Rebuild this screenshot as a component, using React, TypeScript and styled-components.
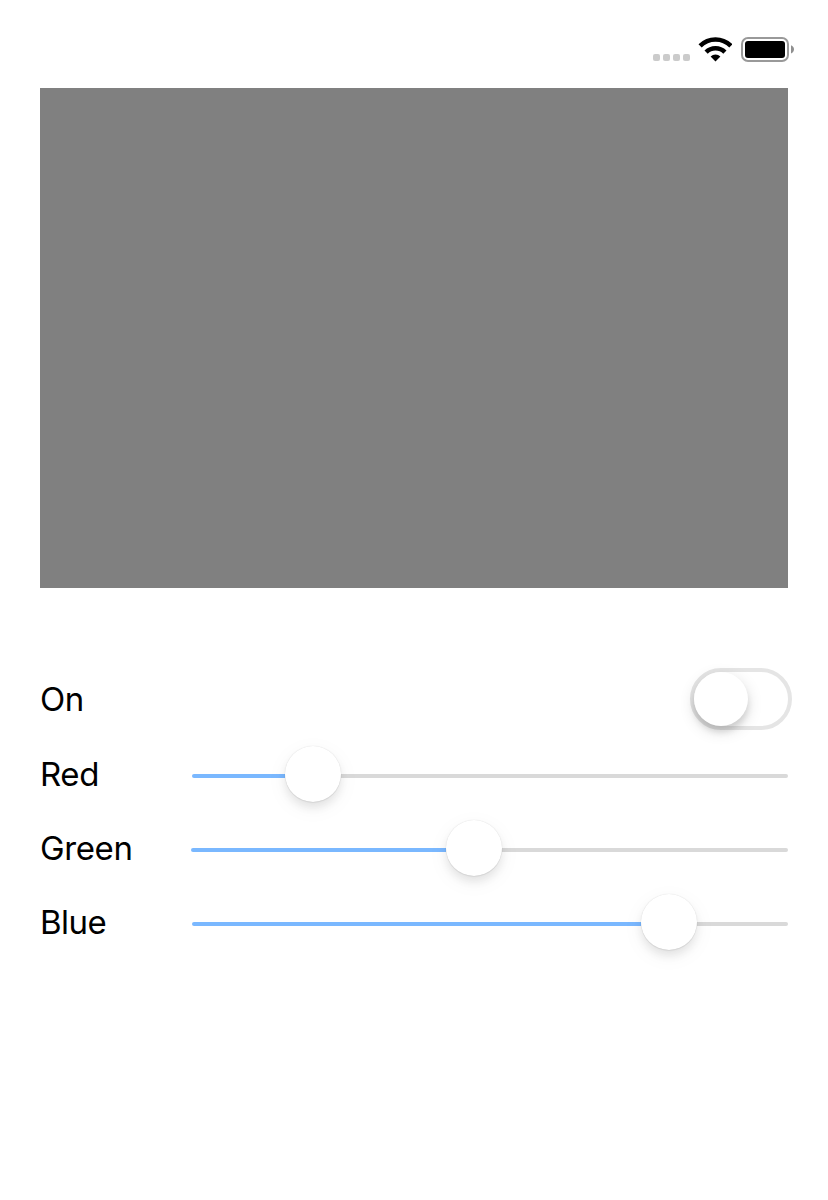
import React from "react";
import styled, { createGlobalStyle } from "styled-components";

const GlobalStyle = createGlobalStyle`
  * { box-sizing: border-box; }
  body { margin: 0; background: #fff; color: #000; }
`;

const Screen = styled.main`
  display: flex;
  flex-direction: column;
  width: 828px;
  height: 1200px;
  background: #fff;
  font-family: Inter, "Liberation Sans", sans-serif;
  overflow: hidden;
`;

const StatusBar = styled.header`
  display: flex;
  justify-content: flex-end;
  height: 88px;
  padding: 37px 34px 0 0;
`;

const Signal = styled.div`
  display: flex;
  gap: 3px;
  margin: 17px 8px 0 0;
`;

const SignalDot = styled.span`
  width: 7px;
  height: 7px;
  border-radius: 2px;
  background: #cbcbcb;
`;

const WifiIcon = styled.svg`
  width: 34px;
  height: 25px;
  margin-right: 9px;
`;

const BatteryIcon = styled.svg`
  width: 53px;
  height: 25px;
`;

const Preview = styled.section`
  height: 500px;
  margin: 0 40px;
  background: #808080;
`;

const Controls = styled.section`
  display: flex;
  flex-direction: column;
  padding: 74px 40px 0;
`;

const Row = styled.div`
  display: flex;
  align-items: center;
  height: 74px;
`;

const SwitchRow = styled(Row)`
  margin-bottom: 1px;
`;

const Label = styled.label<{ $tracking: number }>`
  flex: none;
  font-size: 33px;
  line-height: 40px;
  letter-spacing: ${({ $tracking }) => $tracking}px;
`;

const Toggle = styled.button`
  width: 102px;
  height: 62px;
  margin: 0 -4px 0 auto;
  padding: 0;
  border: 4px solid #e5e5e5;
  border-radius: 31px;
  background: #fff;
`;

const Knob = styled.span`
  display: block;
  width: 54px;
  height: 54px;
  border-radius: 50%;
  background: #fff;
  box-shadow: 0 6px 6px rgba(0, 0, 0, 0.11), 0 5px 16px rgba(0, 0, 0, 0.14);
`;

const Slider = styled.div<{ $width: number }>`
  display: flex;
  align-items: center;
  width: ${({ $width }) => $width}px;
  height: 56px;
  margin-left: auto;
`;

const Track = styled.div<{ $filled?: boolean }>`
  flex: ${({ $filled }) => ($filled ? "none" : "1")};
  height: 4px;
  margin-top: 4px;
  border-radius: ${({ $filled }) => ($filled ? "2px 0 0 2px" : "0 2px 2px 0")};
  background: ${({ $filled }) => ($filled ? "#7ab8ff" : "#d9d9d9")};
`;

const Thumb = styled.div`
  flex: none;
  width: 56px;
  height: 56px;
  border-radius: 50%;
  background: #fff;
  box-shadow: 0 0 1px rgba(0, 0, 0, 0.16), 0 1px 1px rgba(0, 0, 0, 0.06),
    0 6px 8px rgba(0, 0, 0, 0.08), 0 6px 22px rgba(0, 0, 0, 0.05);
  z-index: 1;
`;

const channels = [
  { name: "Red", width: 596, filled: 93, tracking: -0.4 },
  { name: "Green", width: 597, filled: 255, tracking: -0.4 },
  { name: "Blue", width: 596, filled: 449, tracking: -0.5 },
];

export default function App() {
  return (
    <Screen>
      <GlobalStyle />
      <StatusBar>
        <Signal>
          {[0, 1, 2, 3].map((dot) => (
            <SignalDot key={dot} />
          ))}
        </Signal>
        <WifiIcon viewBox="0 0 34 25">
          <g fill="none" stroke="#000" strokeWidth="4.5">
            <path d="M2.1 8.9A21.7 21.7 0 0 1 32.9 8.9" />
            <path d="M8.1 15.1A13.2 13.2 0 0 1 26.9 15.1" />
          </g>
          <path d="M12.6 19.6A7 7 0 0 1 22.4 19.6L17.5 24.4Z" />
        </WifiIcon>
        <BatteryIcon viewBox="0 0 53 25">
          <rect x="1" y="1" width="46" height="23" rx="6" fill="none" stroke="#999" strokeWidth="2" />
          <rect x="4" y="4" width="40" height="17" rx="3" />
          <path d="M50 8.2C52 9 53 10.5 53 12.3S52 15.6 50 16.4Z" fill="#8f8f8f" />
        </BatteryIcon>
      </StatusBar>
      <Preview />
      <Controls>
        <SwitchRow>
          <Label $tracking={-0.4}>On</Label>
          <Toggle type="button" role="switch" aria-checked="false" aria-label="On">
            <Knob />
          </Toggle>
        </SwitchRow>
        {channels.map(({ name, width, filled, tracking }) => (
          <Row key={name}>
            <Label $tracking={tracking}>{name}</Label>
            <Slider
              $width={width}
              role="slider"
              aria-label={name}
              aria-valuenow={Math.round((filled / 540) * 100)}
            >
              <Track $filled style={{ width: filled }} />
              <Thumb />
              <Track />
            </Slider>
          </Row>
        ))}
      </Controls>
    </Screen>
  );
}
